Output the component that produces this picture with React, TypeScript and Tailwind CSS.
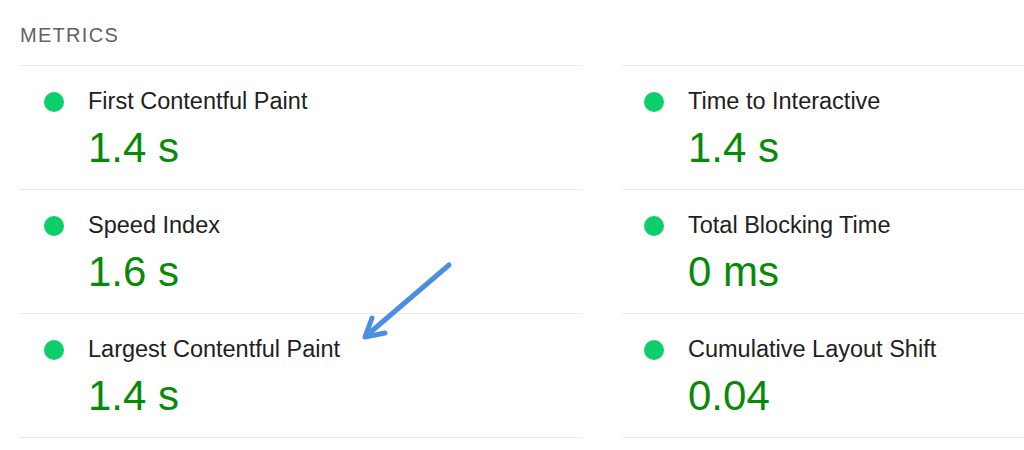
const metrics = [
  [
    { label: "First Contentful Paint", value: "1.4 s" },
    { label: "Time to Interactive", value: "1.4 s" },
  ],
  [
    { label: "Speed Index", value: "1.6 s" },
    { label: "Total Blocking Time", value: "0 ms" },
  ],
  [
    { label: "Largest Contentful Paint", value: "1.4 s" },
    { label: "Cumulative Layout Shift", value: "0.04" },
  ],
];

type Metric = { label: string; value: string };

const MetricCell = ({ metric, right }: { metric: Metric; right?: boolean }) => (
  <div className="border-t border-[#ebebeb] pt-6 pb-5">
    <div className={`flex items-center ${right ? "-ml-0.5" : ""}`}>
      <span className="ml-6 w-5 h-5 rounded-full bg-[#0cce6b] shrink-0" />
      <span className="ml-6 text-[23.5px] leading-[23px] text-[#212121]">
        {metric.label}
      </span>
    </div>
    <div
      className={`mt-[14px] text-[42px] leading-[42px] text-[#088a08] ${
        right ? "pl-[66px]" : "pl-[68px]"
      }`}
    >
      {metric.value}
    </div>
  </div>
);

export default function App() {
  return (
    <div className="relative w-[1024px] h-[450px] overflow-hidden bg-white font-['Liberation_Sans',Arial,sans-serif]">
      <div className="pl-5 pt-[25px] text-[20px] leading-[20px] tracking-[1.3px] text-[#616161]">
        METRICS
      </div>
      <div className="mt-5 pl-5 grid grid-cols-[562px_562px] gap-x-10">
        {metrics.map((row) =>
          row.map((m, i) => (
            <MetricCell key={m.label} metric={m} right={i === 1} />
          ))
        )}
        <div className="border-t border-[#ebebeb]" />
        <div className="border-t border-[#ebebeb]" />
      </div>

      {/* annotation arrow */}
      <svg
        className="absolute left-0 top-0 pointer-events-none"
        width="1024"
        height="450"
        viewBox="0 0 1024 450"
        fill="none"
      >
        <g
          stroke="#4a8fe2"
          strokeWidth="5"
          strokeLinecap="round"
          strokeLinejoin="round"
        >
          <path d="M449 265 L366 336" />
          <path d="M372 318 L365 337 L385 333" />
        </g>
      </svg>
    </div>
  );
}
